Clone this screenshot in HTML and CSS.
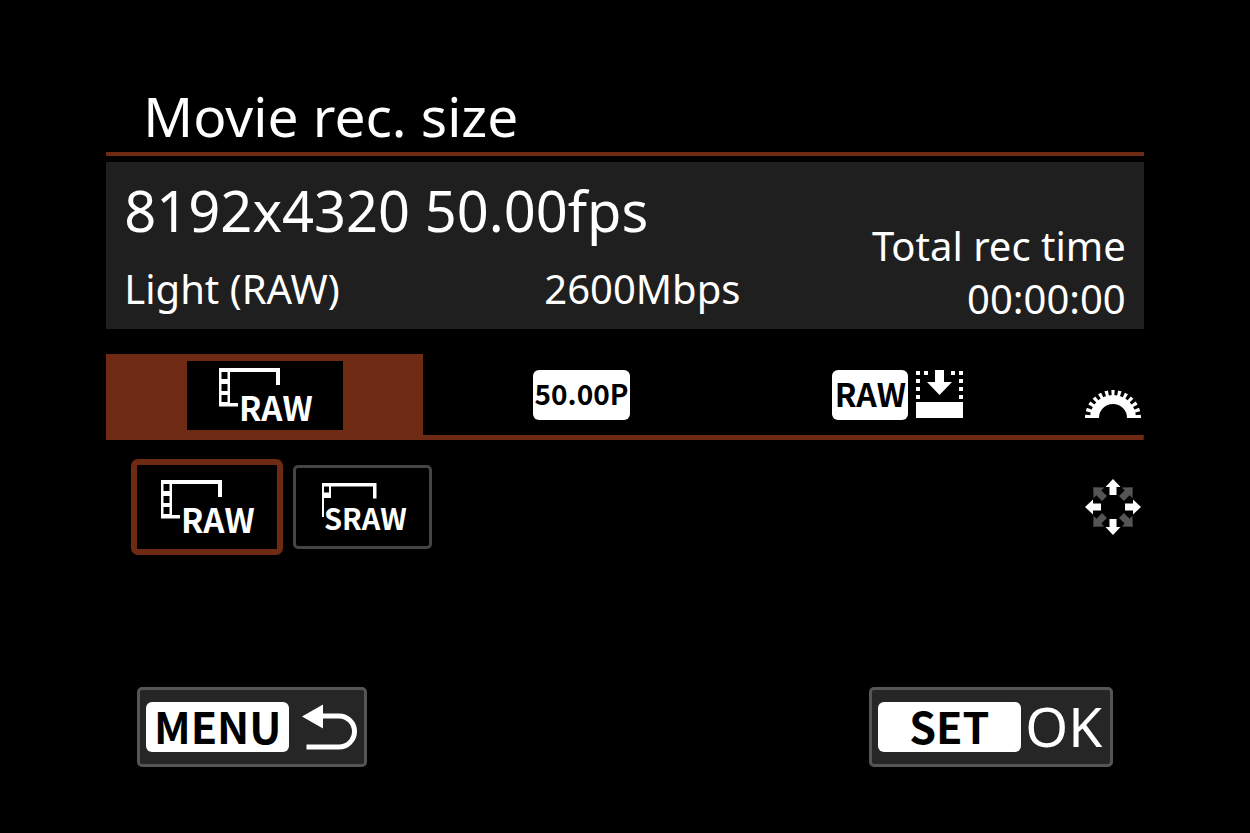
FILE: index.html
```html
<!DOCTYPE html>
<html lang="en">
<head>
<meta charset="utf-8">
<meta name="viewport" content="width=device-width, initial-scale=1">
<title>Movie rec. size</title>
<link rel="stylesheet" href="styles.css">
</head>
<body>
<main class="screen">
  <h1 class="title">Movie rec. size</h1>

  <section class="summary" aria-label="Current setting">
    <div class="summary-main">
      <p class="resolution">8192x4320 50.00fps</p>
      <div class="details">
        <span>Light (RAW)</span>
        <span>2600Mbps</span>
      </div>
    </div>
    <div class="rec-time">
      <span>Total rec time</span>
      <span>00:00:00</span>
    </div>
  </section>

  <nav class="tabs" aria-label="Setting">
    <button class="tab tab-active" type="button">
      <span class="tab-value">
        <svg class="film" width="92" height="54" viewBox="0 0 92 54">
          <path fill-rule="evenodd" d="M0 0H61V17H57V4H11V35H19V38.500H0ZM2.500 4V11H8.500V4ZM2.500 16V23H8.500V16ZM2.500 27V34H8.500V27Z"/>
          <text class="film-text" x="20" y="53">RAW</text>
        </svg>
      </span>
    </button>
    <button class="tab" type="button">
      <span class="badge badge-rate">50.00P</span>
    </button>
    <button class="tab" type="button">
      <span class="badge badge-raw">RAW</span>
      <svg class="compress" width="48" height="50" viewBox="0 0 48 50">
        <path d="M0 1h4v4H0zM8 1h4v4H8zM35 1h4v4h-4zM43 1h4v4h-4zM0 9h4v4H0zM0 17h4v4H0zM0 25h4v4H0zM43 9h4v4h-4zM43 17h4v4h-4zM43 25h4v4h-4zM0 32h47v16H0zM19 0h9v12h8L23.500 25 11 12h8z"/>
      </svg>
    </button>
    <span class="hint">
      <svg width="56" height="28" viewBox="0 0 56 28">
        <path class="dial-ring" d="M9.500 28a18.500 18.500 0 0 1 37 0"/>
        <path class="dial-teeth" pathLength="25" d="M3 28a25 25 0 0 1 50 0"/>
      </svg>
    </span>
  </nav>

  <section class="options" aria-label="Image size">
    <button class="option option-selected" type="button">
      <svg class="film" width="92" height="54" viewBox="0 0 92 54">
        <path fill-rule="evenodd" d="M0 0H61V17H57V4H11V35H19V38.500H0ZM2.500 4V11H8.500V4ZM2.500 16V23H8.500V16ZM2.500 27V34H8.500V27Z"/>
        <text class="film-text" x="20" y="53">RAW</text>
      </svg>
    </button>
    <button class="option" type="button">
      <svg class="film" width="82" height="49" viewBox="0 0 82 49">
        <path fill-rule="evenodd" d="M0 0H54.500V15.500H51V3.500H9V15H2V34H0ZM2 3.500V9.500H7V3.500Z"/>
        <text class="film-text film-text-small" x="2" y="47">SRAW</text>
      </svg>
    </button>
    <span class="hint hint-pad">
      <svg width="56" height="56" viewBox="-28 -28 56 56">
        <defs>
          <path id="arrow" d="M0-28L7.500-20H3.500V-12H-3.500V-20H-7.500Z"/>
        </defs>
        <g class="pad-dim">
          <use href="#arrow" transform="rotate(45)"/>
          <use href="#arrow" transform="rotate(135)"/>
          <use href="#arrow" transform="rotate(225)"/>
          <use href="#arrow" transform="rotate(315)"/>
        </g>
        <g class="pad-lit">
          <use href="#arrow"/>
          <use href="#arrow" transform="rotate(90)"/>
          <use href="#arrow" transform="rotate(180)"/>
          <use href="#arrow" transform="rotate(270)"/>
        </g>
      </svg>
    </span>
  </section>

  <footer class="actions">
    <button class="action" type="button" aria-label="MENU back">
      <span class="key">MENU</span>
      <svg class="return" width="56" height="46" viewBox="0 0 56 46">
        <path class="return-line" d="M19 12H37a15.500 15.500 0 0 1 0 31H4.500"/>
        <path class="return-head" d="M0 12.500L21 0.500V24.500Z"/>
      </svg>
    </button>
    <button class="action" type="button">
      <span class="key">SET</span>
      <span class="action-label">OK</span>
    </button>
  </footer>
</main>
</body>
</html>
```
FILE: styles.css
```css
* {
  box-sizing: border-box;
}

body {
  margin: 0;
  background: #000;
  color: #fff;
  font-family: "Noto Sans", "Open Sans", sans-serif;
}

svg {
  display: block;
  fill: #fff;
}

button {
  margin: 0;
  padding: 0;
  border: 0;
  background: none;
  color: inherit;
  font: inherit;
}

.screen {
  padding: 80px 8.5% 64px;
}

.title {
  margin: 0;
  padding: 0 37px;
  border-bottom: 4px solid #6e2a12;
  font-size: 55px;
  font-weight: 400;
  line-height: 72px;
}

.summary {
  display: flex;
  justify-content: space-between;
  margin-top: 6px;
  padding: 12px 18px 4px;
  background: #1f1f1f;
  font-size: 40px;
  line-height: 53px;
}

.resolution {
  margin: 0;
  font-size: 56px;
  line-height: 72px;
}

.details {
  display: grid;
  grid-template-columns: 420px auto;
  padding: 16px 0 10px;
}

.rec-time {
  display: flex;
  flex-direction: column;
  align-items: flex-end;
  justify-content: flex-end;
}

.tabs {
  display: grid;
  grid-template-columns: 1fr 1fr 1fr 87px;
  height: 86px;
  margin-top: 25px;
  background: linear-gradient(#6e2a12, #6e2a12) bottom / 100% 5px no-repeat;
}

.tab {
  display: flex;
  align-items: center;
  justify-content: center;
  gap: 8px;
  padding-bottom: 4px;
}

.tab-active {
  background: #6e2a12;
}

.tab-value {
  display: grid;
  place-items: center;
  width: 156px;
  height: 69px;
  background: #000;
}

.film {
  overflow: visible;
}

.film-text {
  font-family: "Noto Sans CJK JP", "Noto Sans", sans-serif;
  font-size: 33px;
  font-weight: 700;
  stroke: #000;
  stroke-width: 2px;
  paint-order: stroke;
}

.film-text-small {
  font-size: 29px;
}

.badge {
  display: grid;
  place-items: center;
  height: 50px;
  padding-bottom: 4px;
  border-radius: 6px;
  background: #fff;
  color: #000;
  font-family: "Noto Sans CJK JP", "Noto Sans", sans-serif;
  font-size: 32px;
  font-weight: 700;
  line-height: 46px;
}

.badge-rate {
  width: 97px;
  font-size: 28px;
}

.badge-raw {
  width: 76px;
}

.hint {
  align-self: end;
  justify-self: end;
  padding: 0 3px 22px 0;
}

.dial-ring {
  fill: none;
  stroke: #fff;
  stroke-width: 9px;
}

.dial-teeth {
  fill: none;
  stroke: #fff;
  stroke-width: 6px;
  stroke-dasharray: 1 1;
}

.options {
  display: flex;
  align-items: center;
  gap: 10px;
  margin-top: 19px;
  padding-left: 25px;
}

.option {
  display: grid;
  place-items: center;
  width: 139px;
  height: 84px;
  border: 3px solid #444;
  border-radius: 5px;
}

.option-selected {
  width: 152px;
  height: 96px;
  border: 6px solid #6e2a12;
  border-radius: 7px;
}

.hint-pad {
  align-self: center;
  margin-left: auto;
  padding-bottom: 0;
}

.pad-dim {
  fill: #555;
}

.actions {
  display: flex;
  justify-content: space-between;
  margin-top: 132px;
  padding: 0 31px;
}

.action {
  display: flex;
  align-items: center;
  height: 80px;
  padding: 0 6px;
  border: 3px solid #555;
  border-radius: 5px;
  background: #262626;
}

.key {
  display: grid;
  place-items: center;
  width: 143px;
  height: 50px;
  padding-bottom: 4px;
  border-radius: 6px;
  background: #fff;
  color: #000;
  font-family: "Noto Sans CJK JP", "Noto Sans", sans-serif;
  font-size: 43px;
  font-weight: 700;
  line-height: 46px;
}

.return {
  margin: 0 0 0 13px;
}

.return-line {
  fill: none;
  stroke: #fff;
  stroke-width: 5px;
}

.action-label {
  width: 83px;
  padding: 0 0 2px 3px;
  font-size: 55px;
  line-height: 72px;
}
```
